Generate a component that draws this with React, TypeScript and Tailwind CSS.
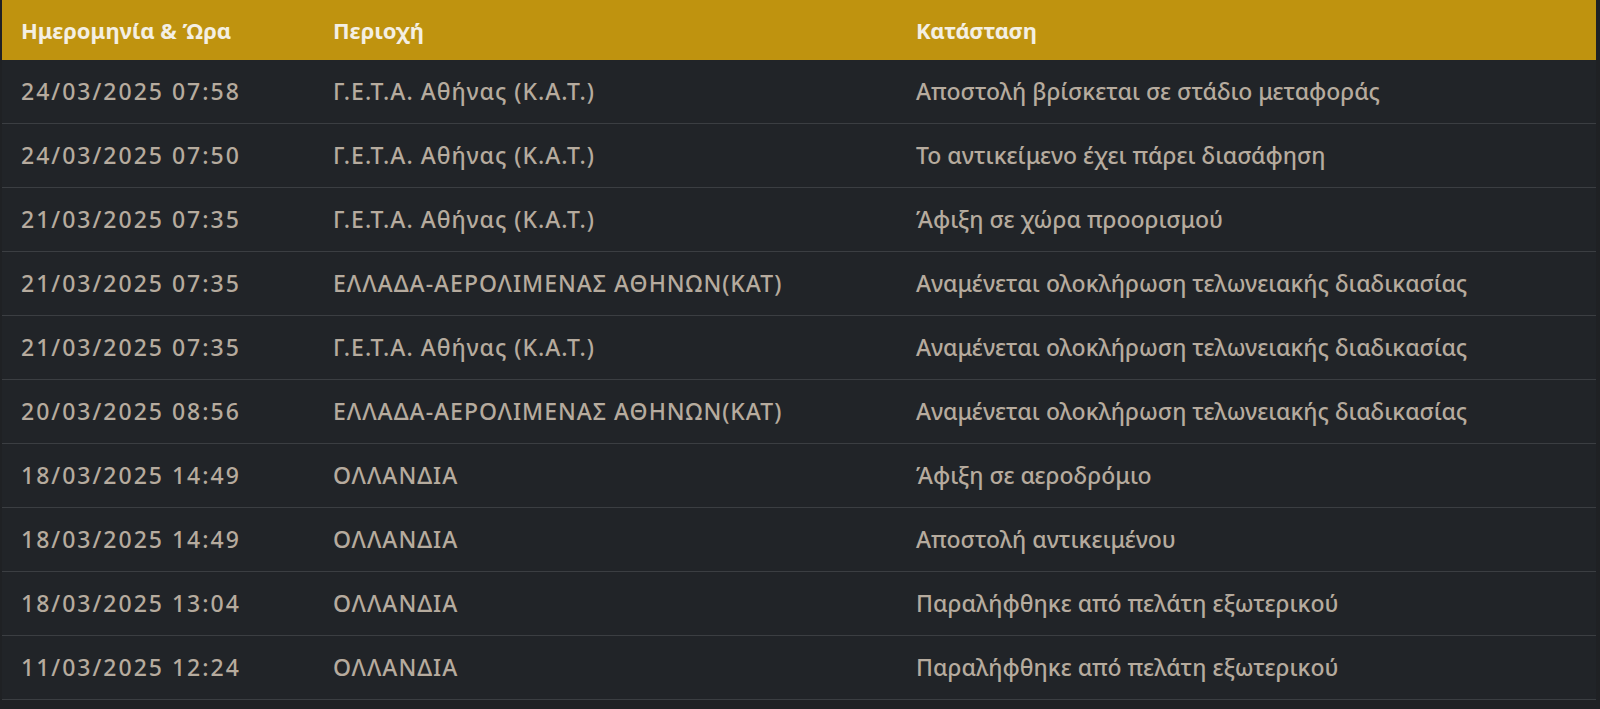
const rows = [
  { date: '24/03/2025 07:58', area: 'Γ.Ε.Τ.Α. Αθήνας (Κ.Α.Τ.)', status: 'Αποστολή βρίσκεται σε στάδιο μεταφοράς' },
  { date: '24/03/2025 07:50', area: 'Γ.Ε.Τ.Α. Αθήνας (Κ.Α.Τ.)', status: 'Το αντικείμενο έχει πάρει διασάφηση' },
  { date: '21/03/2025 07:35', area: 'Γ.Ε.Τ.Α. Αθήνας (Κ.Α.Τ.)', status: 'Άφιξη σε χώρα προορισμού' },
  { date: '21/03/2025 07:35', area: 'ΕΛΛΑΔΑ-ΑΕΡΟΛΙΜΕΝΑΣ ΑΘΗΝΩΝ(ΚΑΤ)', status: 'Αναμένεται ολοκλήρωση τελωνειακής διαδικασίας' },
  { date: '21/03/2025 07:35', area: 'Γ.Ε.Τ.Α. Αθήνας (Κ.Α.Τ.)', status: 'Αναμένεται ολοκλήρωση τελωνειακής διαδικασίας' },
  { date: '20/03/2025 08:56', area: 'ΕΛΛΑΔΑ-ΑΕΡΟΛΙΜΕΝΑΣ ΑΘΗΝΩΝ(ΚΑΤ)', status: 'Αναμένεται ολοκλήρωση τελωνειακής διαδικασίας' },
  { date: '18/03/2025 14:49', area: 'ΟΛΛΑΝΔΙΑ', status: 'Άφιξη σε αεροδρόμιο' },
  { date: '18/03/2025 14:49', area: 'ΟΛΛΑΝΔΙΑ', status: 'Αποστολή αντικειμένου' },
  { date: '18/03/2025 13:04', area: 'ΟΛΛΑΝΔΙΑ', status: 'Παραλήφθηκε από πελάτη εξωτερικού' },
  { date: '11/03/2025 12:24', area: 'ΟΛΛΑΝΔΙΑ', status: 'Παραλήφθηκε από πελάτη εξωτερικού' },
]

export default function App() {
  return (
    <div className="min-h-[709px] bg-[#1f2124] font-['Noto_Sans',sans-serif]">
      <div className="ml-[2px] w-[1594px]">
        {/* Header */}
        <div className="grid grid-cols-[312px_600px_1fr] h-[60px] items-center bg-[#bf930f] text-[22px] font-bold text-[#f4efe3]">
          <div className="pl-[19px]">Ημερομηνία &amp; Ώρα</div>
          <div className="pl-[19px]">Περιοχή</div>
          <div className="pl-[2px] tracking-[-0.3px]">Κατάσταση</div>
        </div>

        {/* Rows */}
        <div className="bg-[#212428]">
          {rows.map((row, idx) => (
            <div
              key={idx}
              className="grid grid-cols-[312px_600px_1fr] h-[64px] items-center border-b border-[#3b3e42] text-[23px] font-medium text-[#b6ab9e]"
            >
              <div className="pl-[19px] tracking-[2px]">{row.date}</div>
              <div className="pl-[19px] tracking-[1px]">{row.area}</div>
              <div className="pl-[2px]">{row.status}</div>
            </div>
          ))}
        </div>
      </div>
    </div>
  )
}
